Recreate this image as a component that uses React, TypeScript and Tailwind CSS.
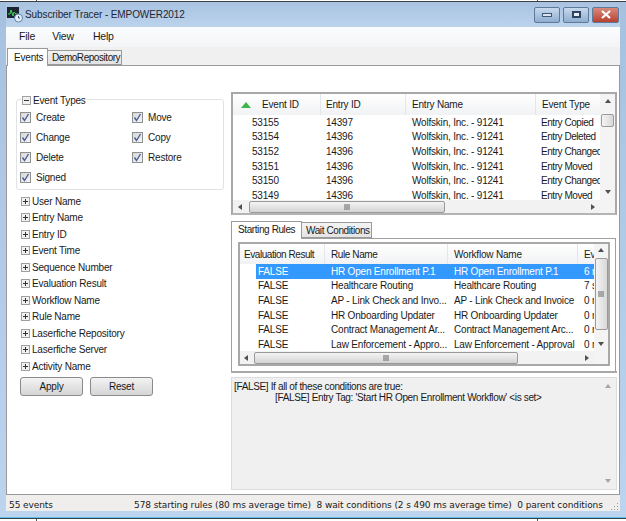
import React from "react";

const FONT = "font-['Liberation_Sans',Arial,sans-serif]";

const EVENTS = [
  ["53155", "14397", "Wolfskin, Inc. - 91241", "Entry Copied"],
  ["53154", "14396", "Wolfskin, Inc. - 91241", "Entry Deleted"],
  ["53152", "14396", "Wolfskin, Inc. - 91241", "Entry Changed"],
  ["53151", "14396", "Wolfskin, Inc. - 91241", "Entry Moved"],
  ["53150", "14396", "Wolfskin, Inc. - 91241", "Entry Changed"],
  ["53149", "14396", "Wolfskin, Inc. - 91241", "Entry Moved"],
];

const RULES = [
  ["FALSE", "HR Open Enrollment P.1", "HR Open Enrollment P.1", "6 ms"],
  ["FALSE", "Healthcare Routing", "Healthcare Routing", "7 s"],
  ["FALSE", "AP - Link Check and Invo...", "AP - Link Check and Invoice", "0 ms"],
  ["FALSE", "HR Onboarding Updater", "HR Onboarding Updater", "0 ms"],
  ["FALSE", "Contract Management Ar...", "Contract Management Arc...", "0 ms"],
  ["FALSE", "Law Enforcement - Appro...", "Law Enforcement - Approval", "0 ms"],
];

const FILTERS = [
  "User Name",
  "Entry Name",
  "Entry ID",
  "Event Time",
  "Sequence Number",
  "Evaluation Result",
  "Workflow Name",
  "Rule Name",
  "Laserfiche Repository",
  "Laserfiche Server",
  "Activity Name",
];

function Arrow({ dir, color = "#505050" }: { dir: "up" | "down" | "left" | "right"; color?: string }) {
  const pts = {
    up: "4,1 7,5 1,5",
    down: "1,3 7,3 4,7",
    left: "5,1 5,7 1,4",
    right: "3,1 3,7 7,4",
  }[dir];
  return (
    <svg width="8" height="8" viewBox="0 0 8 8">
      <polygon points={pts} fill={color} />
    </svg>
  );
}

function Grip({ vertical }: { vertical?: boolean }) {
  return (
    <svg width="8" height="8" viewBox="0 0 8 8">
      {vertical ? (
        <path d="M1 2H7M1 4H7M1 6H7" stroke="#666" strokeWidth="1" />
      ) : (
        <path d="M2 1V7M4 1V7M6 1V7" stroke="#666" strokeWidth="1" />
      )}
    </svg>
  );
}

function HScroll({ thumb, arrow }: { thumb: string; arrow: string }) {
  return (
    <div className="h-[13px] flex items-center bg-[#f2f2f2] shrink-0">
      <div className={`${arrow} flex justify-center shrink-0`}>
        <Arrow dir="left" />
      </div>
      <div className={`${thumb} h-[12px] rounded-[2px] border border-[#9a9a9a] bg-gradient-to-b from-[#f4f4f4] to-[#d4d4d4] flex items-center justify-center shrink-0`}>
        <Grip />
      </div>
      <div className="flex-1" />
      <div className="w-[17px] flex justify-center shrink-0">
        <Arrow dir="right" />
      </div>
    </div>
  );
}

function Checkbox({ label }: { label: string }) {
  return (
    <div className="flex items-center gap-[5px] h-[13px]">
      <div className="w-[11px] h-[11px] border border-[#8e8f8f] bg-gradient-to-br from-[#d8d8d8] to-[#f4f4f4] flex items-center justify-center">
        <svg width="9" height="9" viewBox="0 0 9 9">
          <path d="M1.5 4.5L3.5 7.5L7.5 1" fill="none" stroke="#4a5f97" strokeWidth="1.4" />
        </svg>
      </div>
      <span>{label}</span>
    </div>
  );
}

function PlusBox({ minus }: { minus?: boolean }) {
  return (
    <svg width="9" height="9" viewBox="0 0 9 9" className="shrink-0">
      <rect x="0.5" y="0.5" width="8" height="8" fill="#f1f1f1" stroke="#a0a0a0" />
      <path d={minus ? "M2 4.5H7" : "M2 4.5H7M4.5 2V7"} stroke="#333" strokeWidth="1" />
    </svg>
  );
}

function WinButton({ width, close, children }: { width: string; close?: boolean; children: React.ReactNode }) {
  return (
    <div
      className={`${width} h-[16px] rounded-[2px] border border-[#5f7a99] flex items-center justify-center ${
        close ? "bg-gradient-to-b from-[#d9887c] to-[#b8402f]" : "bg-gradient-to-b from-[#c8d9ec] to-[#8fadd0]"
      }`}
    >
      {children}
    </div>
  );
}

function HeaderCell({ className, children }: { className: string; children: React.ReactNode }) {
  return <div className={`${className} shrink-0 h-full flex items-center border-r border-[#e3e6ea] whitespace-nowrap overflow-hidden`}>{children}</div>;
}

function TitleBar() {
  return (
    <div className="h-[25px] shrink-0 flex items-center pl-[1px] pr-[1px] bg-gradient-to-b from-[#a8c2e0] to-[#bcd3ec]">
      <svg width="16" height="16" viewBox="0 0 16 16" className="shrink-0">
        <rect x="0" y="0" width="12" height="11" fill="#1b2430" />
        <path d="M1 7L3 7L4 3L6 9L7 5L9 7L11 7" fill="none" stroke="#43d35a" strokeWidth="1" />
        <circle cx="11.5" cy="11" r="4" fill="#e9eef4" stroke="#5b84ad" />
        <path d="M11.5 9V11H13" fill="none" stroke="#35597f" strokeWidth="1" />
      </svg>
      <span className="ml-[2px] text-[10px] text-[#1c2733] tracking-[-0.1px]">Subscriber Tracer - EMPOWER2012</span>
      <div className="ml-auto flex items-center gap-[3px]">
        <WinButton width="w-[26px]">
          <div className="w-[10px] h-[4px] bg-[#d9e4f0] border border-[#3d5878]" />
        </WinButton>
        <WinButton width="w-[26px]">
          <div className="w-[9px] h-[7px] bg-[#e6eef6] border-2 border-[#2f4460]" />
        </WinButton>
        <WinButton width="w-[27px]" close>
          <svg width="12" height="9" viewBox="0 0 12 9">
            <path d="M2 1L10 8M10 1L2 8" stroke="#fff" strokeWidth="2.2" />
          </svg>
        </WinButton>
      </div>
    </div>
  );
}

function FilterPanel() {
  return (
    <div className="w-[224px] shrink-0 pl-[9px] pt-[33px]">
      <div className="relative w-[208px] h-[91px] border border-[#dfe3e8] rounded-[3px] pl-[3px] pt-[11px]">
        <div className="absolute left-[4px] top-[-5px] bg-white flex items-center gap-[2px] px-[1px] leading-[11px]">
          <PlusBox minus />
          <span>Event Types</span>
        </div>
        <div className="grid grid-cols-[112px_1fr] gap-y-[7px]">
          <Checkbox label="Create" />
          <Checkbox label="Move" />
          <Checkbox label="Change" />
          <Checkbox label="Copy" />
          <Checkbox label="Delete" />
          <Checkbox label="Restore" />
          <Checkbox label="Signed" />
        </div>
      </div>
      <div className="mt-[3px] pl-[5px]">
        {FILTERS.map((f) => (
          <div key={f} className="h-[16.5px] flex items-center gap-[2px]">
            <PlusBox />
            <span>{f}</span>
          </div>
        ))}
      </div>
      <div className="mt-[2px] pl-[4px] flex gap-[7px]">
        {["Apply", "Reset"].map((b) => (
          <div
            key={b}
            className="w-[63px] h-[19px] pt-[1px] rounded-[3px] border border-[#8a8a8a] bg-gradient-to-b from-[#f3f3f3] to-[#d5d5d5] flex items-center justify-center"
          >
            {b}
          </div>
        ))}
      </div>
    </div>
  );
}

function EventList() {
  return (
    <div className="h-[123px] w-[386px] shrink-0 border-2 border-[#a8a8a8] border-b-[#b4b4b4] flex bg-white">
      <div className="flex-1 min-w-0 flex flex-col">
        <div className="h-[21px] shrink-0 flex bg-gradient-to-b from-[#ffffff] to-[#f1f2f4]">
          <HeaderCell className="w-[88px] pl-[8px]">
            <svg width="10" height="6" viewBox="0 0 10 6" className="mr-[11px] shrink-0">
              <polygon points="5,0 10,6 0,6" fill="#3fb54a" />
            </svg>
            <span>Event ID</span>
          </HeaderCell>
          <HeaderCell className="w-[85px] pl-[5px]">Entry ID</HeaderCell>
          <HeaderCell className="w-[130px] pl-[6px]">Entry Name</HeaderCell>
          <div className="pl-[6px] flex items-center whitespace-nowrap">Event Type</div>
        </div>
        <div className="flex-1 min-h-0 overflow-hidden">
          {EVENTS.map((r) => (
            <div key={r[0]} className="h-[14.6px] flex items-center whitespace-nowrap">
              <div className="w-[88px] shrink-0 pl-[19px]">{r[0]}</div>
              <div className="w-[85px] shrink-0 pl-[5px]">{r[1]}</div>
              <div className="w-[130px] shrink-0 pl-[6px]">{r[2]}</div>
              <div className="pl-[5px] tracking-[-0.45px]">{r[3]}</div>
            </div>
          ))}
        </div>
        <HScroll thumb="w-[196px]" arrow="w-[16px]" />
      </div>
      <div className="w-[15px] shrink-0 bg-[#f4f4f4] flex flex-col items-center pt-[4px]">
        <Arrow dir="up" />
        <div className="w-[13px] h-[13px] mt-[8px] rounded-[2px] border border-[#9a9a9a] bg-gradient-to-r from-[#f4f4f4] to-[#d8d8d8]" />
        <div className="flex-1" />
        <div className="mb-[18px]">
          <Arrow dir="down" />
        </div>
      </div>
    </div>
  );
}

function RuleTabs() {
  return (
    <div className="mt-[5px] h-[151px] w-[385px] shrink-0 flex flex-col">
      <div className="h-[18px] shrink-0 flex items-end whitespace-nowrap tracking-[-0.4px]">
        <div className="w-[71px] h-[18px] -mb-px relative bg-white border border-b-0 border-[#9a9a9a] pl-[6px]">Starting Rules</div>
        <div className="w-[70px] h-[16px] border border-l-0 border-[#9a9a9a] bg-gradient-to-b from-[#f4f4f4] to-[#e4e4e4] pl-[4px] flex items-center">Wait Conditions</div>
      </div>
      <div className="flex-1 min-h-0 border border-b-0 border-[#a0a0a0] p-[3px] pl-[6px] pr-[5px] pb-[5px]">
        <div className="h-full border-2 border-[#a8a8a8] flex bg-white">
          <div className="flex-1 min-w-0 flex flex-col overflow-hidden">
            <div className="h-[20px] shrink-0 flex bg-gradient-to-b from-[#ffffff] to-[#f1f2f4]">
              <HeaderCell className="w-[85px] pl-[4px] tracking-[-0.45px]">Evaluation Result</HeaderCell>
              <HeaderCell className="w-[123px] pl-[6px] tracking-[-0.4px]">Rule Name</HeaderCell>
              <HeaderCell className="w-[130px] pl-[6px]">Workflow Name</HeaderCell>
              <div className="pl-[6px] flex items-center">Ev</div>
            </div>
            <div className="flex-1 min-h-0 overflow-hidden">
              {RULES.map((r, i) => (
                <div key={r[1]} className={`h-[14.6px] flex items-center whitespace-nowrap ${i === 0 ? "text-white" : ""}`}>
                  <div className="w-[16px] shrink-0 h-full" />
                  <div className={`flex h-full items-center flex-1 ${i === 0 ? "bg-[#3399ff]" : ""}`}>
                    <div className="w-[69px] pl-[2px] shrink-0">{r[0]}</div>
                    <div className="w-[123px] pl-[6px] shrink-0">{r[1]}</div>
                    <div className="w-[130px] pl-[6px] shrink-0">{r[2]}</div>
                    <div className="pl-[6px]">{r[3]}</div>
                  </div>
                </div>
              ))}
            </div>
            <HScroll thumb="w-[264px]" arrow="w-[14px]" />
          </div>
          <div className="w-[14px] shrink-0 bg-[#f4f4f4] flex flex-col items-center pt-[3px]">
            <Arrow dir="up" />
            <div className="w-[13px] h-[72px] mt-[3px] rounded-[2px] border border-[#9a9a9a] bg-gradient-to-r from-[#f4f4f4] to-[#d8d8d8] flex items-center justify-center">
              <Grip vertical />
            </div>
            <div className="flex-1" />
            <div className="mb-[17px]">
              <Arrow dir="down" />
            </div>
          </div>
        </div>
      </div>
    </div>
  );
}

function DetailPanel() {
  return (
    <div className="flex-1 min-h-0 w-[386px] flex flex-col">
      <div className="h-[2px] bg-[#a8a8a8] shrink-0" />
      <div className="mt-[4px] flex-1 min-h-0 border border-[#dcdcdc] bg-[#f0f0f0] flex mb-[4px]">
        <div className="flex-1 pl-[2px] pt-[3px] tracking-[-0.35px] leading-[11px]">
          <div>[FALSE] If all of these conditions are true:</div>
          <div className="pl-[41px]">{"[FALSE] Entry Tag: 'Start HR Open Enrollment Workflow' <is set>"}</div>
        </div>
        <div className="w-[16px] shrink-0 flex flex-col items-center justify-between py-[5px]">
          <Arrow dir="up" color="#a5a5a5" />
          <Arrow dir="down" color="#a5a5a5" />
        </div>
      </div>
    </div>
  );
}

export default function App() {
  return (
    <div className={`w-[626px] h-[521px] bg-white overflow-hidden text-[10px] tracking-[-0.2px] text-[#1a1a1a] ${FONT}`}>
      <div className="h-[1px] flex">
        <div className="ml-[36px] w-px bg-[#555]" />
        <div className="ml-[500px] w-px bg-[#555]" />
      </div>
      <div className="h-[518px] border-t border-b border-[#3c3f44] bg-gradient-to-b from-[#a6c1e0] to-[#bcd4ee] px-[6px] flex flex-col">
        <TitleBar />
        <div className="h-[20px] shrink-0 bg-gradient-to-b from-[#fafcfe] to-[#f4f5f6] flex items-center text-[10.5px] pl-[13px] gap-[16px]">
          <span>File</span>
          <span className="ml-[1px]">View</span>
          <span className="ml-[3px]">Help</span>
        </div>
        <div className="h-[18px] shrink-0 bg-[#f0f0f0] flex items-end pl-[1px] whitespace-nowrap">
          <div className="w-[41px] h-[18px] -mb-px relative bg-white border border-b-0 border-[#9a9a9a] pl-[6px] pt-[1px]">Events</div>
          <div className="w-[74px] h-[15px] border border-l-0 border-[#9a9a9a] bg-gradient-to-b from-[#f2f2f2] to-[#e2e2e2] pl-[4px] flex items-center tracking-[-0.45px]">DemoRepository</div>
        </div>
        <div className="flex-1 min-h-0 bg-white border border-[#9a9a9a] flex">
          <FilterPanel />
          <div className="flex-1 min-w-0 pt-[26px] flex flex-col">
            <EventList />
            <RuleTabs />
            <DetailPanel />
          </div>
        </div>
        <div className="h-[16px] shrink-0 bg-[#f0eeec] flex items-center font-['DejaVu_Sans',sans-serif] text-[9px] tracking-[-0.09px] pl-[3px] pt-[5px] mb-[6px] whitespace-nowrap">
          <span className="w-[125px] shrink-0">55 events</span>
          <span>578 starting rules (80 ms average time)&nbsp; 8 wait conditions (2 s 490 ms average time)&nbsp; 0 parent conditions</span>
          <svg width="8" height="8" viewBox="0 0 8 8" className="ml-auto mr-[1px] shrink-0">
            <path d="M6 1H7V2H6ZM6 4H7V5H6ZM3 4H4V5H3ZM6 7H7V8H6ZM3 7H4V8H3ZM0 7H1V8H0Z" fill="#9a9a9a" />
          </svg>
        </div>
        <div className="h-px shrink-0 -mx-[6px] bg-[#5cc4ea]" />
      </div>
      <div className="flex h-[2px]">
        <div className="ml-[36px] w-px bg-[#555]" />
        <div className="ml-[500px] w-px bg-[#555]" />
      </div>
    </div>
  );
}
